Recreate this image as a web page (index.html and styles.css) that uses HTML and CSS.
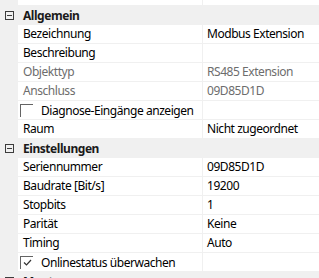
FILE: index.html
```html
<!DOCTYPE html>
<html lang="de">
	<head>
		<meta charset="UTF-8" />
		<title>Eigenschaften</title>
		<link rel="stylesheet" href="styles.css">
	</head>
	<body>
		<div class="props">
			<div class="row top"><div class="gutter"></div><div class="name"></div><div class="value"></div></div>

			<div class="row cat"><span class="toggle"></span><span class="cat-title">Allgemein</span></div>
			<div class="row"><div class="gutter"></div><div class="name">Bezeichnung</div><div class="value">Modbus Extension</div></div>
			<div class="row"><div class="gutter"></div><div class="name">Beschreibung</div><div class="value"></div></div>
			<div class="row off"><div class="gutter"></div><div class="name">Objekttyp</div><div class="value">RS485 Extension</div></div>
			<div class="row off"><div class="gutter"></div><div class="name">Anschluss</div><div class="value">09D85D1D</div></div>
			<div class="row"><div class="gutter"></div><div class="name check"><span class="box"></span>Diagnose-Eingänge anzeigen</div><div class="value"></div></div>
			<div class="row"><div class="gutter"></div><div class="name">Raum</div><div class="value">Nicht zugeordnet</div></div>

			<div class="row cat"><span class="toggle"></span><span class="cat-title">Einstellungen</span></div>
			<div class="row"><div class="gutter"></div><div class="name">Seriennummer</div><div class="value">09D85D1D</div></div>
			<div class="row"><div class="gutter"></div><div class="name">Baudrate [Bit/s]</div><div class="value">19200</div></div>
			<div class="row"><div class="gutter"></div><div class="name">Stopbits</div><div class="value">1</div></div>
			<div class="row"><div class="gutter"></div><div class="name">Parität</div><div class="value">Keine</div></div>
			<div class="row"><div class="gutter"></div><div class="name">Timing</div><div class="value">Auto</div></div>
			<div class="row"><div class="gutter"></div><div class="name check"><span class="box"><svg width="9" height="8" viewBox="0 0 9 8"><polyline points="1,3.5 3.5,6 8,1" fill="none" stroke="#333" stroke-width="1.2"/></svg></span>Onlinestatus überwachen</div><div class="value"></div></div>

			<div class="row cat"><span class="toggle"></span><span class="cat-title">Montage</span></div>
		</div>
	</body>
</html>
```

FILE: styles.css
```css
* {
	box-sizing: border-box;
	margin: 0;
	padding: 0;
}

body {
	background: #fff;
	font-family: 'Noto Sans', 'Open Sans', sans-serif;
	font-size: 12px;
	letter-spacing: -0.45px;
	color: #000;
	overflow: hidden;
}

.props {
	width: 319px;
}

.row {
	display: flex;
	height: 19px;
	border-bottom: 1px solid #f0f0f0;
	line-height: 17px;
	white-space: nowrap;
}

.row.top {
	height: 6px;
}

.gutter {
	width: 18px;
	flex: none;
	background: #f0f0f0;
}

.name {
	width: 185px;
	flex: none;
	padding-left: 5px;
	border-right: 1px solid #f0f0f0;
}

.value {
	flex: 1;
	padding-left: 4px;
}

.off .name,
.off .value {
	color: #6d6d6d;
}

.name.check {
	display: flex;
	align-items: center;
	padding-left: 2px;
}

.box {
	width: 13px;
	height: 13px;
	margin-right: 8px;
	border-top: 1px solid #646464;
	border-left: 1px solid #646464;
	display: flex;
	align-items: center;
	justify-content: center;
}

.cat {
	background: #f0f0f0;
	align-items: center;
}

.toggle {
	position: relative;
	width: 9px;
	height: 9px;
	margin-left: 5px;
	border: 1px solid #3c3c3c;
}

.toggle::after {
	content: "";
	position: absolute;
	left: 1px;
	top: 3px;
	width: 5px;
	height: 1px;
	background: #3c3c3c;
}

.cat-title {
	margin-left: 9px;
	font-weight: 700;
	color: #1a1a1a;
}
```
